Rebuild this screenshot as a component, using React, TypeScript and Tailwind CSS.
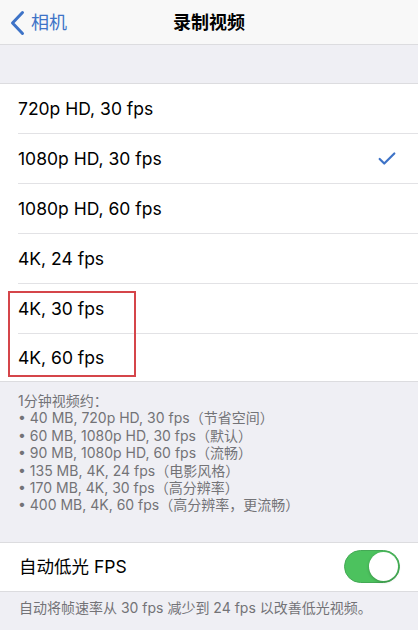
import { Check } from 'lucide-react';

const font = { fontFamily: 'Inter, "Noto Sans CJK SC", sans-serif' };

const modes = [
  '720p HD, 30 fps',
  '1080p HD, 30 fps',
  '1080p HD, 60 fps',
  '4K, 24 fps',
  '4K, 30 fps',
  '4K, 60 fps',
];

const notes = [
  '40 MB, 720p HD, 30 fps（节省空间）',
  '60 MB, 1080p HD, 30 fps（默认）',
  '90 MB, 1080p HD, 60 fps（流畅）',
  '135 MB, 4K, 24 fps（电影风格）',
  '170 MB, 4K, 30 fps（高分辨率）',
  '400 MB, 4K, 60 fps（高分辨率，更流畅）',
];

export default function App() {
  return (
    <div className="w-[418px] h-[630px] bg-[#efeff4] overflow-hidden" style={font}>
      {/* Nav bar */}
      <div className="relative h-[45px] bg-[#f8f8f8] border-b border-[#dcdcdf] flex items-center justify-center pt-[2px]">
        <div className="absolute left-[9px] top-[1px] h-[44px] flex items-center gap-[5px] text-[#3e73c7]">
          <svg width="17" height="26" viewBox="0 0 17 26" fill="none">
            <path d="M13.5 2.5 L3.5 13 L13.5 23.5" stroke="currentColor" strokeWidth="3" strokeLinecap="round" strokeLinejoin="round" />
          </svg>
          <span className="text-[18px] leading-none">相机</span>
        </div>
        <span className="text-[18px] font-semibold text-black leading-none">录制视频</span>
      </div>

      <div className="h-[38px]" />

      {/* Format list */}
      <div className="relative bg-white border-t border-b border-[#dcdcdf]">
        {modes.map((m, i) => (
          <div key={m} className={`flex items-center pl-[18px] ${i === 5 ? 'h-[47px]' : 'h-[50px]'}`}>
            <div className={`flex-1 h-full flex items-center pr-[20px] ${i < 5 ? 'border-b border-[#e2e2e5]' : ''}`}>
              <span className="flex-1 text-[17.5px] text-black leading-none">{m}</span>
              {i === 1 && <Check size={22} strokeWidth={2.4} className="text-[#3e73c7]" />}
            </div>
          </div>
        ))}
        <div className="absolute left-[8px] top-[207px] w-[128px] h-[86px] border-[2.5px] border-[#d5454a]" />
      </div>

      {/* Notes */}
      <div className="pl-[18px] pt-[10px] text-[14px] leading-[17.4px] text-[#737377]">
        <div>1分钟视频约：</div>
        {notes.map((n) => (
          <div key={n}>• {n}</div>
        ))}
      </div>

      <div className="h-[28px]" />

      {/* Low light toggle */}
      <div className="h-[50px] bg-white border-t border-b border-[#dcdcdf] flex items-center pl-[19px] pr-[18px]">
        <span className="flex-1 text-[17.5px] text-black leading-none">自动低光 FPS</span>
        <div className="w-[56px] h-[33px] rounded-full bg-[#4cc25e] border border-[#44a955] flex items-center justify-end pr-[1px]">
          <div className="w-[29px] h-[29px] rounded-full bg-white shadow-[0_1px_3px_rgba(0,0,0,0.25)]" />
        </div>
      </div>

      <div className="pl-[19px] pt-[7px] text-[14px] text-[#737377] leading-[18px] whitespace-nowrap">
        自动将帧速率从 30 fps 减少到 24 fps 以改善低光视频。
      </div>
    </div>
  );
}
